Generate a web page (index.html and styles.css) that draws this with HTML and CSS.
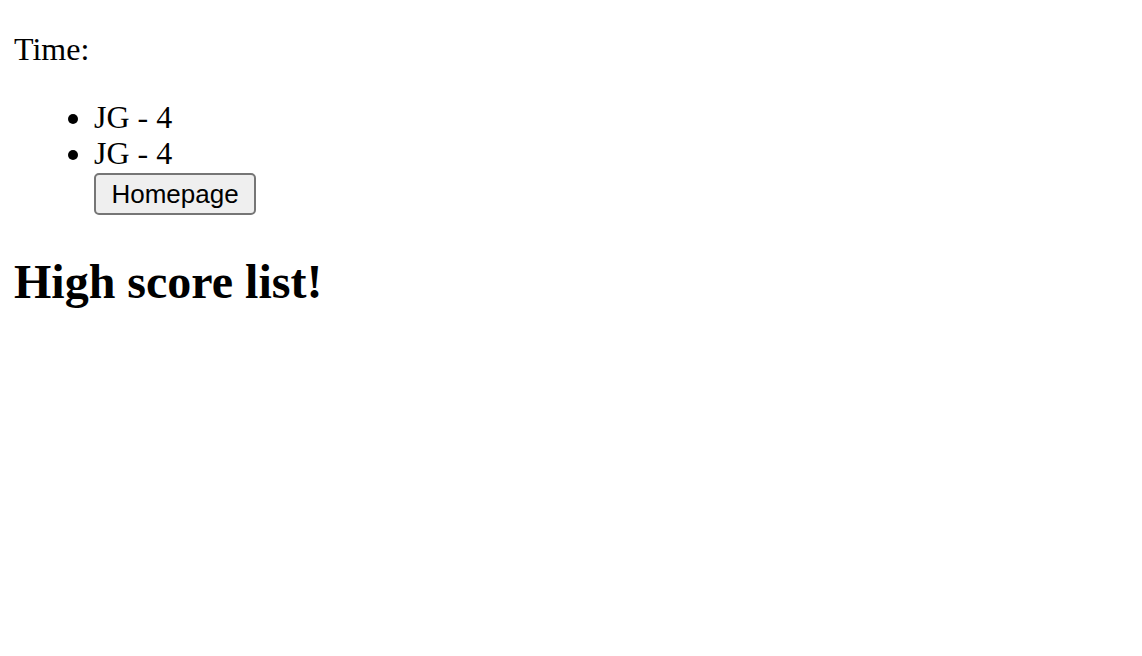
FILE: index.html
```html
<!DOCTYPE html>
<html>
<head>
<meta charset="utf-8">
<link rel="stylesheet" href="styles.css">
</head>
<body>
<p class="time">Time:</p>
<ul class="scores">
<li>JG - 4</li>
<li>JG - 4</li>
<button class="home-btn">Homepage</button>
</ul>
<h1 class="title">High score list!</h1>
</body>
</html>
```
FILE: styles.css
```css
html, body {
  background: #ffffff;
}
body {
  margin: 31px 14px;
  font-family: "Liberation Serif", "Times New Roman", serif;
  font-size: 32px;
  line-height: 36px;
  color: #000000;
}
.time {
  margin: 0;
}
.scores {
  margin: 32px 0 0 0;
  padding-left: 80px;
}
.home-btn {
  display: block;
  margin-top: 2px;
  font-family: "Liberation Sans", Arial, sans-serif;
  font-size: 26px;
  line-height: 30px;
  color: #000000;
  background: #efefef;
  border: 2px solid #767676;
  border-radius: 5px;
  padding: 4px 15px;
  width: 162px;
  height: 42px;
  box-sizing: border-box;
}
.title {
  margin: 39px 0 0 0;
  font-size: 48px;
  line-height: 55px;
  font-weight: bold;
}
```
